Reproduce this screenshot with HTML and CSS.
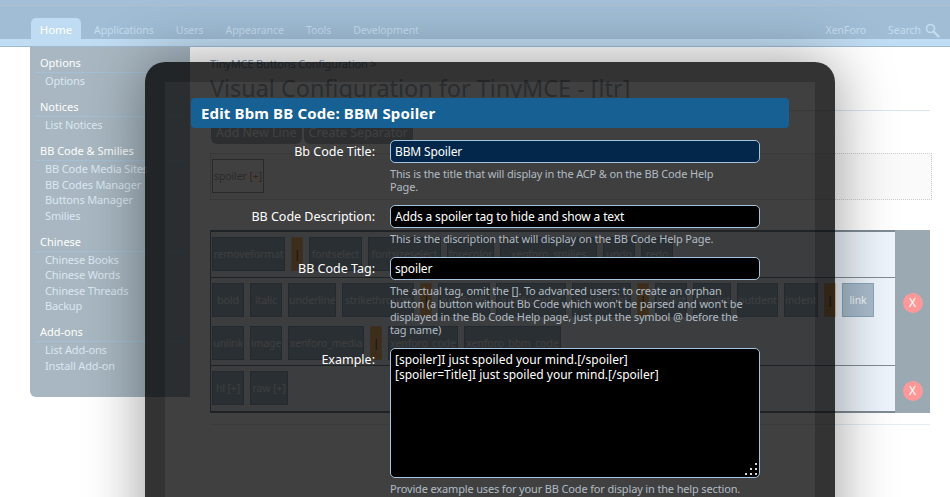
FILE: index.html

```html
<!DOCTYPE html>
<html lang="en">
<head>
  <meta charset="UTF-8" />
  <meta name="viewport" content="width=device-width, initial-scale=1.0" />
  <title>Edit Bbm BB Code</title>
  <link rel="stylesheet" href="styles.css">
</head>
<body>

<div class="page">
  <header>
    <div class="topbar"></div>
    <nav class="tabs">
      <a class="tab active">Home</a>
      <a class="tab">Applications</a>
      <a class="tab">Users</a>
      <a class="tab">Appearance</a>
      <a class="tab">Tools</a>
      <a class="tab">Development</a>
      <span class="tabs-right">
        <a class="tab t-xen">XenForo</a>
        <a class="tab">Search</a>
        <svg class="search-icon" width="15" height="15" viewBox="0 0 15 15">
          <circle cx="5.5" cy="5.5" r="4" fill="none" stroke="#c5dcee" stroke-width="1.6"/>
          <path d="M8.5 8.5 L13.5 13.5" stroke="#c5dcee" stroke-width="2.4" stroke-linecap="round"/>
        </svg>
      </span>
    </nav>
    <div class="tabline"></div>
  </header>

  <div class="layout">
    <aside class="sidebar">
      <section class="side-group">
        <h4>Options</h4>
        <a>Options</a>
      </section>
      <section class="side-group">
        <h4>Notices</h4>
        <a>List Notices</a>
      </section>
      <section class="side-group">
        <h4>BB Code &amp; Smilies</h4>
        <a>BB Code Media Sites</a>
        <a>BB Codes Manager</a>
        <a>Buttons Manager</a>
        <a>Smilies</a>
      </section>
      <section class="side-group">
        <h4>Chinese</h4>
        <a>Chinese Books</a>
        <a>Chinese Words</a>
        <a>Chinese Threads</a>
        <a>Backup</a>
      </section>
      <section class="side-group">
        <h4>Add-ons</h4>
        <a>List Add-ons</a>
        <a>Install Add-on</a>
      </section>
    </aside>

    <main>
      <div class="crumb">TinyMCE Buttons Configuration &gt;</div>
      <h1>Visual Configuration for TinyMCE - [ltr]</h1>
      <div class="actions">
        <button type="button" class="act">Add New Line</button>
        <button type="button" class="act">Create Separator</button>
      </div>
      <div class="available">
        <span class="cell plain">spoiler <em>[+]</em></span>
      </div>
      <div class="lines">
        <div class="line">
          <div class="line-cells">
            <span class="cell w73">removeformat</span><span class="cell sep">|</span>
            <span class="cell w53">fontselect</span><span class="cell w73">fontsizeselect</span>
            <span class="cell w47">forecolor</span><span class="cell w97">xenforo_smilies</span>
            <span class="cell w32">undo</span><span class="cell w32">redo</span>
          </div>
          <div class="line-del"></div>
        </div>
        <div class="line">
          <div class="line-cells line-wrap">
            <span class="cell w32">bold</span><span class="cell w32">italic</span>
            <span class="cell w48">underline</span><span class="cell w72">strikethrough</span><span class="cell sep">|</span>
            <span class="cell w52">justifyleft</span><span class="cell w70">justifycenter</span><span class="cell w59">justifyright</span><span class="cell sep">|</span>
            <span class="cell w32">bullist</span><span class="cell w38">numlist</span>
            <span class="cell w41">outdent</span><span class="cell w34">indent</span><span class="cell sep">|</span>
            <span class="cell w32">link</span>
            <span class="cell w32">unlink</span><span class="cell w32">image</span>
            <span class="cell w76">xenforo_media</span><span class="cell sep">|</span>
            <span class="cell w70">xenforo_code</span><span class="cell w97">xenforo_bbm_code</span>
          </div>
          <div class="line-del"><span class="del">X</span></div>
        </div>
        <div class="line">
          <div class="line-cells">
            <span class="cell w32">hl [+]</span><span class="cell w38">raw [+]</span>
          </div>
          <div class="line-del"><span class="del">X</span></div>
        </div>
      </div>
      <div class="rule"></div>
    </main>
  </div>

  <div class="overlay">
    <h2>Edit Bbm BB Code: BBM Spoiler</h2>
    <form class="form">
      <label for="title">Bb Code Title:</label>
      <div class="field">
        <input type="text" id="title" class="focused" value="BBM Spoiler" />
        <p class="hint">This is the title that will display in the ACP &amp; on the BB Code Help Page.</p>
      </div>

      <label for="desc">BB Code Description:</label>
      <div class="field">
        <input type="text" id="desc" value="Adds a spoiler tag to hide and show a text" />
        <p class="hint">This is the discription that will display on the BB Code Help Page.</p>
      </div>

      <label for="tag">BB Code Tag:</label>
      <div class="field">
        <input type="text" id="tag" value="spoiler" />
        <p class="hint">The actual tag, omit the []. To advanced users: to create an orphan button (a button without Bb Code which won't be parsed and won't be displayed in the Bb Code Help page, just put the symbol @ before the tag name)</p>
      </div>

      <label for="example">Example:</label>
      <div class="field">
        <div class="ta-wrap">
          <textarea id="example">[spoiler]I just spoiled your mind.[/spoiler]
[spoiler=Title]I just spoiled your mind.[/spoiler]</textarea>
          <svg class="grip" width="12" height="12" viewBox="0 0 12 12" fill="#d8d8d8">
            <rect x="10" y="0" width="2" height="2"/>
            <rect x="5" y="5" width="2" height="2"/>
            <rect x="10" y="5" width="2" height="2"/>
            <rect x="0" y="10" width="2" height="2"/>
            <rect x="5" y="10" width="2" height="2"/>
            <rect x="10" y="10" width="2" height="2"/>
          </svg>
        </div>
        <p class="hint">Provide example uses for your BB Code for display in the help section.</p>
      </div>
    </form>
  </div>
</div>

</body>
</html>
```

FILE: styles.css

```css
html, body {
  margin: 0;
  padding: 0;
  height: 497px;
  overflow: hidden;
}
body {
  font-family: 'Noto Sans', 'DejaVu Sans', sans-serif;
  font-size: 11px;
  background: #fff;
}
.page {
  position: relative;
  height: 497px;
  overflow: hidden;
}

/* header */
.topbar {
  height: 5px;
  background: #a3c0d8;
  border-bottom: 1px solid #b5bfc7;
}
.tabs {
  display: flex;
  align-items: stretch;
  height: 21px;
  padding: 12px 10px 0 31px;
  background: #a0bdd5;
}
.tab {
  color: #c5dcee;
  font-size: 10.5px;
  letter-spacing: -0.05px;
  line-height: 24px;
  margin-right: 22px;
}
.tab.active {
  width: 50px;
  margin-right: 13px;
  text-align: center;
  color: #fff;
  font-size: 11.5px;
  letter-spacing: 0;
  background: #c0dcf2;
  border-radius: 5px 5px 0 0;
}
.tabs-right {
  display: flex;
  margin-left: auto;
}
.tabs-right .tab {
  margin-right: 4px;
}
.tabs-right .t-xen {
  margin-right: 22px;
}
.search-icon {
  margin-top: 5px;
}
.tabline {
  height: 7px;
  background: #c0dcf2;
  border-bottom: 1px solid #9fbbd3;
}

/* page behind the overlay */
.layout {
  display: flex;
  align-items: flex-start;
}
.sidebar {
  width: 160px;
  height: 350px;
  margin-left: 30px;
  box-sizing: border-box;
  padding: 7px 6px 0;
  background: #a8b7c1;
  border-radius: 0 0 0 6px;
}
.side-group {
  margin-bottom: 9.5px;
}
.side-group h4 {
  margin: 0;
  padding-left: 4px;
  font-size: 11px;
  font-weight: normal;
  line-height: 18px;
  color: #fff;
  border-bottom: 1px solid #a4bfd6;
}
.side-group a {
  display: block;
  padding-left: 9px;
  line-height: 15.5px;
  letter-spacing: -0.15px;
  color: #dbe8f2;
  white-space: nowrap;
}
main {
  flex: 1;
  padding: 10px 18px 0 20px;
  min-width: 0;
}
.crumb {
  color: #7f9ab5;
  line-height: 14px;
  letter-spacing: -0.15px;
}
h1 {
  margin: 0 2px 0 0;
  padding: 2px 0 7px;
  font-size: 23.4px;
  font-weight: normal;
  line-height: 30px;
  color: #a8b2ba;
  white-space: nowrap;
  border-bottom: 1px solid #d8e6f2;
}
.actions {
  display: flex;
  gap: 2px;
  margin: 10px 0 9px 1px;
}
.act {
  height: 23px;
  padding: 0 5px;
  font: inherit;
  font-size: 12.5px;
  color: #fff;
  background: #b4b8bc;
  border: none;
  border-radius: 0 0 6px 6px;
}
.available {
  height: 47px;
  box-sizing: border-box;
  padding: 5px 1px;
  background: #fafafa;
  border: 1px dotted #ccc;
  margin-bottom: 30px;
}
.cell {
  display: inline-block;
  box-sizing: border-box;
  height: 34px;
  line-height: 32px;
  text-align: center;
  font-size: 10.5px;
  letter-spacing: -0.1px;
  color: #f2f7fb;
  background: #a9bccc;
  border: 1px solid #8aa5bd;
  white-space: nowrap;
  overflow: hidden;
}
.cell.plain {
  width: 52px;
  color: #a8a8a8;
  background: #fff;
  border-color: #a8a8a8;
}
.cell.plain em {
  font-style: normal;
  color: #d58a70;
}
.sep {
  width: 12px;
  background: #f2b872;
  border-color: #e9c39a;
  color: #333;
}
.w32 { width: 32px; }
.w34 { width: 34px; }
.w38 { width: 38px; }
.w41 { width: 41px; }
.w47 { width: 47px; }
.w48 { width: 48px; }
.w52 { width: 52px; }
.w53 { width: 53px; }
.w59 { width: 59px; }
.w70 { width: 70px; }
.w72 { width: 72px; }
.w73 { width: 73px; }
.w76 { width: 76px; }
.w97 { width: 97px; }
.lines {
  background: #9aa9b2;
  width: 720px;
}
.line {
  display: flex;
}
.line-cells {
  display: flex;
  flex-wrap: wrap;
  align-content: flex-start;
  gap: 9px 6px;
  width: 685px;
  box-sizing: border-box;
  padding: 5px 2px 6px 1px;
  background: #edf4fb;
  border-left: 1px solid #7f8b94;
  border-bottom: 1px solid #7f8b94;
}
.line:first-child .line-cells {
  border-top: 2px solid #7f8b94;
}
.line:last-child .line-cells {
  border-bottom-width: 2px;
}
.line-cells.line-wrap {
  padding-bottom: 5px;
}
.line-del {
  flex: 1;
  display: flex;
  align-items: flex-start;
  justify-content: center;
}
.del {
  width: 20px;
  height: 20px;
  margin: 15px 0 0 0;
  border-radius: 50%;
  background: #f99;
  color: #fff;
  font-size: 12px;
  line-height: 20px;
  text-align: center;
}
.rule {
  margin-top: 11px;
  border-top: 1px solid #e4edf5;
  width: 720px;
}

/* overlay */
.overlay {
  position: absolute;
  left: 145px;
  top: 62px;
  width: 598px;
  height: 600px;
  padding: 16px 26px;
  background: rgba(0,0,0,0.75);
  background-clip: padding-box;
  border: 20px solid rgba(0,0,0,0.8);
  border-radius: 20px;
  box-shadow: 0 0 60px rgba(0,0,0,0.4);
}
.overlay h2 {
  margin: 0 0 12px;
  padding: 0 10px;
  height: 30px;
  font-size: 15px;
  font-weight: bold;
  letter-spacing: 0.15px;
  line-height: 30px;
  color: #fff;
  background: #176093;
  border-radius: 4px;
}
.form {
  display: grid;
  grid-template-columns: 184px 370px;
  column-gap: 15px;
  color: #fff;
}
.form label {
  text-align: right;
  font-size: 12.5px;
  line-height: 23px;
  color: #fff;
}
.field {
  margin-bottom: 12px;
}
input, textarea {
  display: block;
  width: 100%;
  box-sizing: border-box;
  font-family: inherit;
  font-size: 12px;
  color: #fff;
  background: #000;
  border: 1px solid #a3c4e0;
  border-radius: 5px;
  padding: 0 4px;
}
input {
  height: 23px;
  letter-spacing: -0.15px;
}
input.focused {
  background: #02274a;
}
.ta-wrap {
  position: relative;
}
textarea {
  height: 130px;
  padding: 3px 4px;
  line-height: 15px;
  resize: none;
}
.grip {
  position: absolute;
  right: 3px;
  bottom: 3px;
}
.hint {
  margin: 4px 17px 0 0;
  font-size: 11px;
  letter-spacing: -0.15px;
  line-height: 13px;
  color: #b2bcc4;
}
```
